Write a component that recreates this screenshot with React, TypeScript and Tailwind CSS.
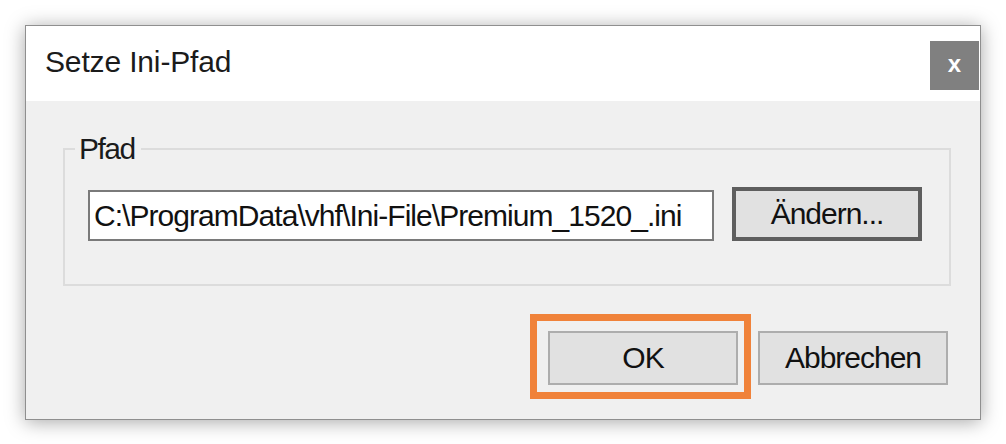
import React from 'react';

const font = "font-['Liberation_Sans',Arial,sans-serif]";

const DialogButton: React.FC<{ label: string; primary?: boolean }> = ({ label, primary }) => (
  <button
    className={`w-[190px] h-[54px] bg-[#e1e1e1] text-[30px] leading-[30px] tracking-[-1px] text-[#111] flex items-center justify-center ${
      primary ? 'border-[4px] border-[#5e5e5e]' : 'border-2 border-[#adadad]'
    }`}
  >
    {label}
  </button>
);

export default function App() {
  return (
    <div className={`w-[1006px] h-[444px] bg-white pt-[25px] pl-[25px] ${font}`}>
      <div className="w-[956px] h-[395px] border border-[#8f8f8f] bg-[#f0f0f0] shadow-[0_2px_18px_rgba(0,0,0,0.35)] flex flex-col">
        {/* title bar */}
        <div className="h-[75px] bg-white flex justify-between items-start">
          <h1 className="mt-[21px] ml-[19px] text-[30px] leading-[30px] tracking-[-0.15px] text-[#1b1b1b]">
            Setze Ini-Pfad
          </h1>
          <button className="mt-[15px] mr-[1px] w-[49px] h-[49px] bg-[#808080] text-white font-bold text-[24px] leading-[24px] flex items-center justify-center pb-[4px]">
            x
          </button>
        </div>

        {/* body */}
        <div className="flex-1 flex flex-col">
          <fieldset className="mt-[33px] ml-[37px] w-[888px] border-2 border-[#dcdcdc] px-[10px] pt-[23px] pb-[43px] min-w-0">
            <legend className="pl-[4px] pr-[6px] text-[30px] leading-[30px] tracking-[-1.5px] text-[#1b1b1b]">
              Pfad
            </legend>
            <div className="pl-[13px] flex items-end gap-[18px]">
              <div className="w-[626px] h-[51px] bg-white border-2 border-[#7a7a7a] pl-[4px] flex items-center text-[30px] leading-[30px] tracking-[-0.95px] text-[#111] whitespace-nowrap overflow-hidden">
                C:\ProgramData\vhf\Ini-File\Premium_1520_.ini
              </div>
              <DialogButton label="Ändern..." primary />
            </div>
          </fieldset>

          <div className="mt-[45px] pr-[32px] flex justify-end gap-[20px]">
            <div className="relative">
              <DialogButton label="OK" />
              <div className="absolute -left-[18px] -top-[17px] -right-[13px] -bottom-[14px] border-[7px] border-[#f0823a] pointer-events-none" />
            </div>
            <DialogButton label="Abbrechen" />
          </div>
        </div>
      </div>
    </div>
  );
}
